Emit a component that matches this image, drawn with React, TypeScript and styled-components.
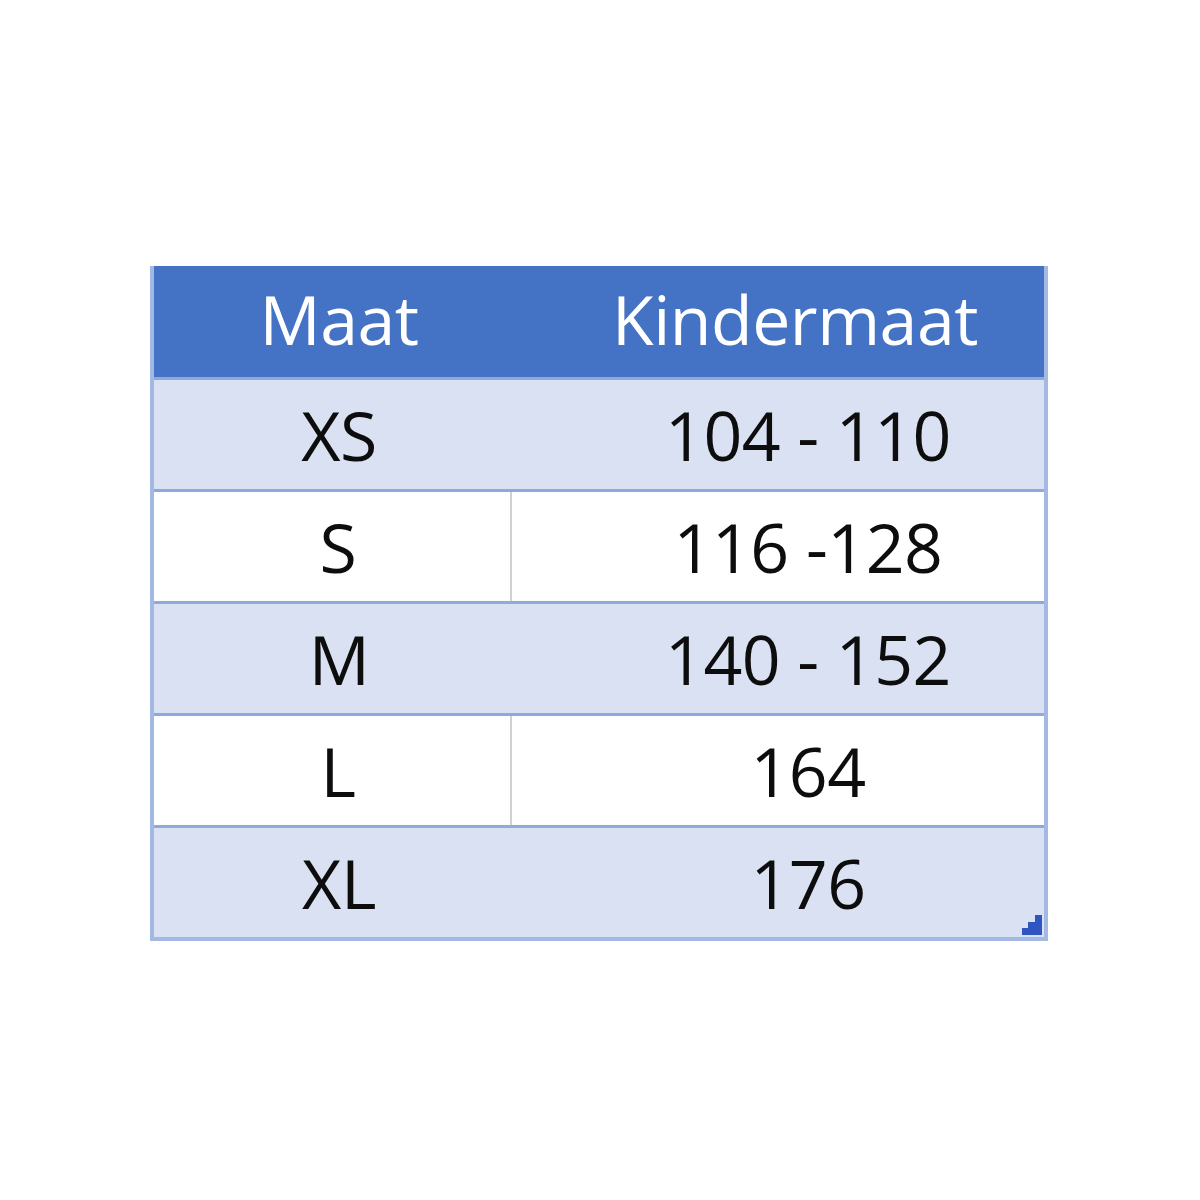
import React from 'react';
import styled, { createGlobalStyle } from 'styled-components';

const GlobalStyle = createGlobalStyle`
  html, body {
    margin: 0;
    padding: 0;
    background: #ffffff;
  }
`;

const Page = styled.div`
  width: 1200px;
  height: 1200px;
  padding: 266px 0 0 150px;
  box-sizing: border-box;
  font-family: 'Open Sans', 'Liberation Sans', sans-serif;
`;

const Table = styled.div`
  position: relative;
  width: 898px;
  box-sizing: border-box;
  border: 4px solid #a3b9e3;
  border-top: none;
  display: flex;
  flex-direction: column;
`;

const HeaderRow = styled.div`
  display: grid;
  grid-template-columns: 358px 1fr;
  height: 111px;
  background: #4472c4;
  align-items: center;
`;

const HeaderCell = styled.div<{ $shift: number }>`
  color: #ffffff;
  font-size: 68px;
  text-align: center;
  padding-left: ${(p) => p.$shift}px;
  padding-bottom: 6px;
  line-height: 1;
  letter-spacing: -0.5px;
`;

const Row = styled.div<{ $shaded: boolean }>`
  display: grid;
  grid-template-columns: 358px 1fr;
  height: 112px;
  box-sizing: border-box;
  border-top: 3px solid #8eaadb;
  background: ${(p) => (p.$shaded ? '#d9e1f2' : '#ffffff')};
`;

const Cell = styled.div<{ $divider?: boolean; $shift: number }>`
  display: flex;
  align-items: center;
  justify-content: center;
  padding-left: ${(p) => p.$shift}px;
  font-size: 68px;
  color: #0d0d0d;
  letter-spacing: -0.5px;
  border-right: ${(p) => (p.$divider ? '2px solid #d0d0d0' : 'none')};
`;

const Handle = styled.svg`
  position: absolute;
  right: 2px;
  bottom: 2px;
`;

const rows = [
  ['XS', '104 - 110'],
  ['S', '116 -128'],
  ['M', '140 - 152'],
  ['L', '164'],
  ['XL', '176'],
];

const App: React.FC = () => {
  return (
    <>
      <GlobalStyle />
      <Page>
        <Table>
          <HeaderRow>
            <HeaderCell $shift={12}>Maat</HeaderCell>
            <HeaderCell $shift={34}>Kindermaat</HeaderCell>
          </HeaderRow>
          {rows.map(([size, kids], i) => (
            <Row key={size} $shaded={i % 2 === 0}>
              <Cell $shift={12} $divider={i % 2 === 1}>{size}</Cell>
              <Cell $shift={60}>{kids}</Cell>
            </Row>
          ))}
          <Handle width="20" height="20" viewBox="0 0 20 20">
            <path d="M13 0h7v20H0v-7h6V7h7z" fill="#2f55c0" />
          </Handle>
        </Table>
      </Page>
    </>
  );
};

export default App;
